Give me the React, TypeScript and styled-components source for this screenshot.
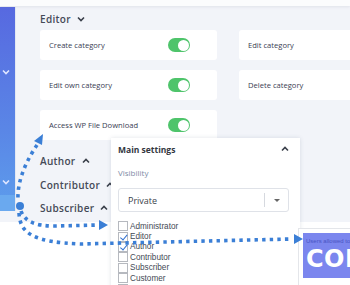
import styled, { createGlobalStyle } from 'styled-components';

const GlobalStyle = createGlobalStyle`
  html, body {
    margin: 0;
    padding: 0;
    background: #ffffff;
  }
  body {
    width: 350px;
    height: 285px;
    overflow: hidden;
    font-family: 'Open Sans', 'Noto Sans', sans-serif;
  }
`;

const Page = styled.div`
  position: relative;
  width: 350px;
  height: 285px;
  overflow: hidden;
  background: #ffffff;
`;

const TopBar = styled.div`
  height: 6px;
  background: #fbfcfd;
  box-shadow: 0 1px 3px rgba(120, 130, 150, 0.15);
  position: relative;
  z-index: 1;
`;

const Workspace = styled.div`
  display: flex;
  height: 216px;
  background: #f2f4f9;
`;

const Sidebar = styled.div`
  width: 15px;
  height: 204px;
  margin-top: 1px;
  flex-shrink: 0;
  display: flex;
  flex-direction: column;
  background: linear-gradient(180deg, #5769e0 0%, #5a86e6 60%, #5d9dec 100%);
  border-right: 1px solid #e3e8f2;
`;

const SideChevron = styled.div<{ $top: number }>`
  height: ${p => p.$top}px;
  display: flex;
  align-items: flex-end;
  padding-left: 2px;
`;

const SideFoot = styled.div`
  margin-top: auto;
  height: 16px;
  background: #6aa9ef;
`;

const Content = styled.div`
  flex: 1;
  padding: 6px 0 0 24px;
  display: flex;
  flex-direction: column;
`;

const SectionTitle = styled.div`
  display: flex;
  align-items: center;
  gap: 6px;
  height: 14px;
  font-size: 10px;
  font-weight: 600;
  color: #454a57;
  letter-spacing: 0.3px;
`;

const Chev = styled.svg`
  width: 8px;
  height: 6px;
`;

const Grid = styled.div`
  display: grid;
  grid-template-columns: 177px 177px;
  column-gap: 22px;
  row-gap: 10px;
  margin-top: 4px;
  margin-bottom: 14px;
`;

const Card = styled.div`
  height: 30px;
  background: #ffffff;
  border-radius: 3px;
  display: flex;
  align-items: center;
  justify-content: space-between;
  padding: 0 27px 0 9px;
  font-size: 7.6px;
  font-weight: 500;
  color: #3a4053;
`;

const Toggle = styled.div`
  width: 22px;
  height: 14px;
  border-radius: 7px;
  background: #4ec46b;
  display: flex;
  align-items: center;
  justify-content: flex-end;
  padding: 0 1.5px;
  box-sizing: border-box;

  &::after {
    content: '';
    width: 11px;
    height: 11px;
    border-radius: 50%;
    background: #ffffff;
  }
`;

const RoleList = styled.div`
  display: flex;
  flex-direction: column;
  gap: 9.5px;
`;

const Popup = styled.div`
  position: absolute;
  left: 111px;
  top: 138px;
  width: 189px;
  height: 160px;
  background: #ffffff;
  box-shadow: 0 0 4px rgba(90, 100, 120, 0.18);
  padding: 4px 11px 0 7px;
  box-sizing: border-box;
  z-index: 2;
`;

const PopupHead = styled.div`
  display: flex;
  align-items: center;
  justify-content: space-between;
  height: 14px;
  font-size: 8.5px;
  font-weight: 700;
  color: #33373f;
`;

const Label = styled.div`
  margin-top: 11px;
  font-size: 8px;
  color: #7e8ba6;
`;

const Select = styled.div`
  margin-top: 10px;
  height: 24px;
  border: 1px solid #dfe2e8;
  border-radius: 3px;
  display: flex;
  align-items: center;
  box-sizing: border-box;
  font-size: 9px;
  color: #3a3f4a;
`;

const SelectValue = styled.div`
  flex: 1;
  padding-left: 9px;
`;

const SelectDivider = styled.div`
  width: 1px;
  height: 14px;
  background: #d6d9df;
`;

const SelectCaret = styled.div`
  width: 23px;
  display: flex;
  justify-content: center;
  &::after {
    content: '';
    border-left: 3px solid transparent;
    border-right: 3px solid transparent;
    border-top: 3px solid #666;
  }
`;

const CheckList = styled.div`
  margin-top: 9px;
  display: flex;
  flex-direction: column;
`;

const CheckRow = styled.div`
  display: flex;
  align-items: center;
  gap: 2px;
  height: 10.4px;
  font-family: 'Liberation Sans', Arial, sans-serif;
  font-size: 8.2px;
  color: #444a55;
`;

const Box = styled.div<{ $on?: boolean }>`
  width: 8px;
  height: 8px;
  border: 1px solid #b6b9bf;
  background: #fff;
  position: relative;
  flex-shrink: 0;
  &::after {
    content: '';
    display: ${p => (p.$on ? 'block' : 'none')};
    position: absolute;
    left: 2.5px;
    top: 0px;
    width: 2.5px;
    height: 5.5px;
    border-right: 1.3px solid #2f6fd0;
    border-bottom: 1.3px solid #2f6fd0;
    transform: rotate(40deg);
  }
`;

const Preview = styled.div`
  position: absolute;
  left: 298px;
  top: 228px;
  width: 60px;
  height: 60px;
  border: 1px solid #e4e6ea;
  background: #ffffff;
  padding: 4px 0 0 4px;
  box-sizing: border-box;
  z-index: 2;
`;

const PreviewCode = styled.div`
  height: 45px;
  background: #7b86ee;
  padding: 5px 0 0 3px;
  box-sizing: border-box;
  overflow: hidden;
  white-space: nowrap;
`;

const PreviewHint = styled.div`
  font-family: 'Liberation Sans', Arial, sans-serif;
  font-size: 6px;
  line-height: 7px;
  color: #4954c4;
`;

const PreviewBig = styled.div`
  margin-top: 2px;
  font-family: 'DejaVu Sans', 'Liberation Sans', sans-serif;
  font-weight: 700;
  font-size: 24px;
  line-height: 24px;
  color: #ffffff;
  letter-spacing: 0.5px;
`;

const Arrows = styled.svg`
  position: absolute;
  left: 0;
  top: 0;
  width: 350px;
  height: 285px;
  pointer-events: none;
  z-index: 3;
`;

const Down = ({ color = '#3a3f4a' }: { color?: string }) => (
  <Chev viewBox="0 0 8 6">
    <path d="M1 1.5 L4 4.5 L7 1.5" fill="none" stroke={color} strokeWidth="1.6" />
  </Chev>
);

const Up = () => (
  <Chev viewBox="0 0 8 6">
    <path d="M1 4.5 L4 1.5 L7 4.5" fill="none" stroke="#3a3f4a" strokeWidth="1.6" />
  </Chev>
);

const permissions = [
  { title: 'Create category', toggle: true },
  { title: 'Edit category', toggle: false },
  { title: 'Edit own category', toggle: true },
  { title: 'Delete category', toggle: false },
  { title: 'Access WP File Download', toggle: true }
];

const roles = [
  { name: 'Administrator', on: false },
  { name: 'Editor', on: true },
  { name: 'Author', on: true },
  { name: 'Contributor', on: false },
  { name: 'Subscriber', on: false },
  { name: 'Customer', on: false },
  { name: '', on: false }
];

const dot = { fill: 'none', stroke: '#3b7fd6', strokeWidth: 3.6, strokeDasharray: '3.4 4.2' };

export default function App() {
  return (
    <Page>
      <GlobalStyle />
      <TopBar />
      <Workspace>
        <Sidebar>
          <SideChevron $top={68}>
            <Down color="#dfe6ff" />
          </SideChevron>
          <SideChevron $top={110}>
            <Down color="#dfe6ff" />
          </SideChevron>
          <SideFoot />
        </Sidebar>
        <Content>
          <SectionTitle>
            Editor <Down />
          </SectionTitle>
          <Grid>
            {permissions.map(p => (
              <Card key={p.title}>
                <span>{p.title}</span>
                {p.toggle && <Toggle />}
              </Card>
            ))}
          </Grid>
          <RoleList>
            <SectionTitle>
              Author <Up />
            </SectionTitle>
            <SectionTitle>
              Contributor <Up />
            </SectionTitle>
            <SectionTitle>
              Subscriber <Up />
            </SectionTitle>
          </RoleList>
        </Content>
      </Workspace>

      <Popup>
        <PopupHead>
          <span>Main settings</span>
          <Up />
        </PopupHead>
        <Label>Visibility</Label>
        <Select>
          <SelectValue>Private</SelectValue>
          <SelectDivider />
          <SelectCaret />
        </Select>
        <CheckList>
          {roles.map((r, i) => (
            <CheckRow key={i}>
              <Box $on={r.on} />
              {r.name}
            </CheckRow>
          ))}
        </CheckList>
      </Popup>

      <Preview>
        <PreviewCode>
          <PreviewHint>Users allowed to</PreviewHint>
          <PreviewBig>CODE</PreviewBig>
        </PreviewCode>
      </Preview>

      <Arrows viewBox="0 0 350 285">
        <path d="M37 145 C27 160 17 180 18 200" {...dot} />
        <polygon points="43,134 34,141 42,145" fill="#3b7fd6" />
        <circle cx="20" cy="206" r="4" fill="#3b7fd6" />
        <path d="M21 211 C25 222 36 226 55 226 L98 225" {...dot} />
        <polygon points="108,225 99,220 99,230" fill="#3b7fd6" />
        <path d="M19 213 C20 234 34 242 80 244 L292 239" {...dot} />
        <polygon points="303,239 294,234 294,244" fill="#3b7fd6" />
      </Arrows>
    </Page>
  );
}
